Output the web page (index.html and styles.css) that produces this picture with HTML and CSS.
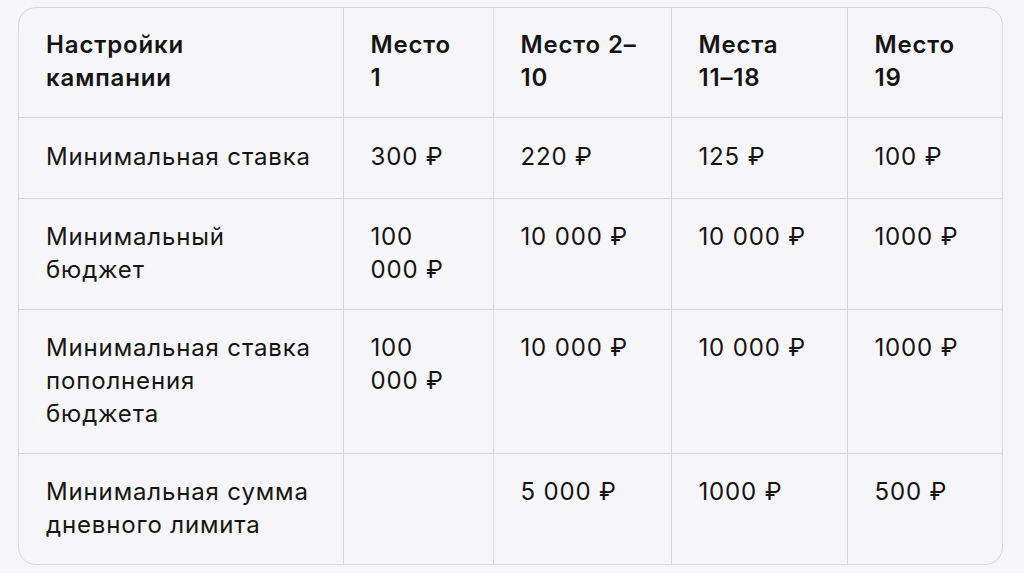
FILE: index.html
```html
<!DOCTYPE html>
<html lang="ru">
<head>
<meta charset="utf-8">
<link rel="stylesheet" href="styles.css">
</head>
<body>
<div class="wrap">
<table class="grid">
<colgroup>
<col class="c1"><col class="c2"><col class="c3"><col class="c4"><col class="c5">
</colgroup>
<thead>
<tr>
<th>Настройки<br>кампании</th>
<th>Место<br>1</th>
<th>Место 2–<br>10</th>
<th>Места<br>11–18</th>
<th>Место<br>19</th>
</tr>
</thead>
<tbody>
<tr class="single">
<td>Минимальная ставка</td>
<td>300 ₽</td>
<td>220 ₽</td>
<td>125 ₽</td>
<td>100 ₽</td>
</tr>
<tr>
<td>Минимальный<br>бюджет</td>
<td>100<br>000 ₽</td>
<td>10 000 ₽</td>
<td>10 000 ₽</td>
<td>1000 ₽</td>
</tr>
<tr>
<td>Минимальная ставка<br>пополнения<br>бюджета</td>
<td>100<br>000 ₽</td>
<td>10 000 ₽</td>
<td>10 000 ₽</td>
<td>1000 ₽</td>
</tr>
<tr>
<td>Минимальная сумма<br>дневного лимита</td>
<td></td>
<td>5 000 ₽</td>
<td>1000 ₽</td>
<td>500 ₽</td>
</tr>
</tbody>
</table>
</div>
</body>
</html>
```
FILE: styles.css
```css
html, body {
  margin: 0;
  padding: 0;
  background: #f6f6f8;
}
body {
  font-family: Inter, "Noto Sans", sans-serif;
  color: #141414;
}
.wrap {
  margin: 7px 0 0 18px;
  width: 983px;
  border: 1.5px solid #d5d5da;
  border-radius: 18px;
  overflow: hidden;
}
.grid {
  width: 100%;
  border-collapse: collapse;
  table-layout: fixed;
}
.c1 { width: 324px; }
.c2 { width: 150px; }
.c3 { width: 178px; }
.c4 { width: 176px; }
.c5 { width: auto; }
.grid th, .grid td {
  text-align: left;
  vertical-align: top;
  padding: 21px 8px 23px 27px;
  font-size: 24px;
  letter-spacing: 0.85px;
  line-height: 33px;
  border-right: 1px solid #d5d5da;
  border-bottom: 1px solid #d5d5da;
}
.grid th {
  font-weight: 600;
  padding-top: 20px;
  padding-bottom: 23px;
}
.grid .single td {
  padding-top: 22px;
  padding-bottom: 25px;
}
.grid tr > :last-child { border-right: none; }
.grid tbody tr:last-child td { border-bottom: none; }
```
